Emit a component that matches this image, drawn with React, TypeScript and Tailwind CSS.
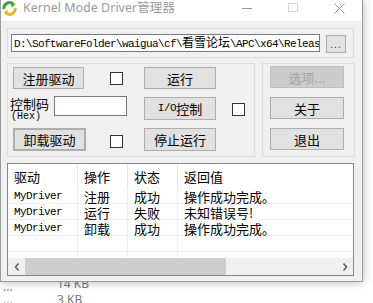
import { FC, ReactNode } from 'react'

// Windows-style dialog: Kernel Mode Driver管理器
const SANS = "font-['Noto_Sans_CJK_SC',sans-serif]"
const MONO = "font-['Liberation_Mono','Noto_Sans_CJK_SC',monospace]"

interface BtnProps {
    children: ReactNode;
    className?: string;
}

const Btn: FC<BtnProps> = ({ children, className = '' }) => (
    <div
        className={`flex items-center justify-center bg-[#e1e1e1] border border-[#adadad] text-[13px] leading-none text-black ${SANS} ${className}`}
    >
        {children}
    </div>
);

const Check: FC = () => <div className="w-[13px] h-[13px] border border-[#333333] bg-white" />;

const rows = [
    ['MyDriver', '注册', '成功', '操作成功完成。'],
    ['MyDriver', '运行', '失败', '未知错误号!'],
    ['MyDriver', '卸载', '成功', '操作成功完成。'],
];

const headers = ['驱动', '操作', '状态', '返回值'];
const colWidths = ['w-[70px]', 'w-[50px]', 'w-[50px]', 'flex-1'];

const AppIcon: FC = () => (
    <svg width="15" height="15" viewBox="0 0 15 15">
        <path d="M2 8 A5.5 5.5 0 0 1 11 3" fill="none" stroke="#3fa535" strokeWidth="3" />
        <path d="M9 0.5 L13.5 3 L9.5 6.5 Z" fill="#3fa535" />
        <path d="M13 7 A5.5 5.5 0 0 1 4 12" fill="none" stroke="#e8b923" strokeWidth="3" />
        <path d="M6 14.5 L1.5 12 L5.5 8.5 Z" fill="#e8b923" />
    </svg>
);

const App: FC = () => {
    return (
        <div className="w-[373px] h-[303px] overflow-hidden bg-white">
            <div className="relative z-10 w-[363px] h-[282px] flex flex-col bg-[#f0f0f0] border border-t-0 border-[#9a9a9a] shadow-[0_0_9px_rgba(0,0,0,0.3)]">
                {/* title bar */}
                <div className="h-[21px] bg-white flex items-start shrink-0">
                    <div className="ml-[1px] mt-[1px]">
                        <AppIcon />
                    </div>
                    <span className="ml-[6px] text-[12.5px] leading-[15px] text-[#9b9b9b] font-['Noto_Sans','Noto_Sans_CJK_SC',sans-serif]">
                        Kernel Mode Driver管理器
                    </span>
                    <div className="flex-1" />
                    <div className="w-[46px] h-[16px] flex items-center justify-center">
                        <div className="w-[10px] h-px bg-[#9b9b9b]" />
                    </div>
                    <div className="w-[46px] h-[15px] flex items-center justify-center">
                        <div className="w-[10px] h-[9px] border border-[#d6d6d6]" />
                    </div>
                    <div className="w-[46px] h-[16px] flex items-center justify-center">
                        <svg width="11" height="11" viewBox="0 0 11 11">
                            <path d="M0.5 0.5 L10.5 10.5 M10.5 0.5 L0.5 10.5" stroke="#9b9b9b" strokeWidth="1" />
                        </svg>
                    </div>
                </div>

                <div className="flex-1 flex flex-col pl-[6px]">
                    {/* path group */}
                    <div className="mt-[7px] w-[347px] h-[30px] border border-[#dcdcdc] flex items-start pl-[3px] pt-[5px]">
                        <div className="w-[309px] h-[18px] bg-white border border-[#7a7a7a] overflow-hidden whitespace-nowrap pl-[2px] flex items-center">
                            <span className={`${MONO} text-[11px] tracking-[-0.6px] leading-none text-black`}>
                                D:\SoftwareFolder\waigua\cf\
                                <span className={`${SANS} text-[12px] tracking-normal`}>看雪论坛</span>
                                \APC\x64\Release\
                            </span>
                        </div>
                        <div className="ml-[6px] mt-[1px] w-[20px] h-[18px] bg-[#e1e1e1] border border-[#adadad] flex items-end justify-center pb-[2px]">
                            <span className="text-[10px] leading-[10px] text-[#333] tracking-[1px] font-['Liberation_Sans',sans-serif]">...</span>
                        </div>
                    </div>

                    {/* buttons */}
                    <div className="mt-[5px] flex">
                        <div className="w-[248px] h-[94px] border border-[#dcdcdc] flex flex-col pl-[2px]">
                            <div className="mt-[3px] h-[22px] flex items-center">
                                <Btn className="ml-[3px] w-[71px] h-[22px]">注册驱动</Btn>
                                <div className="ml-[26px] w-[34px]">
                                    <Check />
                                </div>
                                <Btn className="w-[72px] h-[22px]">运行</Btn>
                            </div>
                            <div className="mt-[7px] h-[24px] flex items-start">
                                <div className="w-[44px] flex flex-col">
                                    <span className={`${SANS} text-[13px] leading-[14px] text-black mt-[1px]`}>控制码</span>
                                    <span className={`${MONO} text-[10px] leading-[10px] text-black mt-[1px] ml-[1px]`}>(Hex)</span>
                                </div>
                                <div className="w-[73px] h-[20px] bg-white border border-[#7a7a7a]" />
                                <Btn className="ml-[17px] mt-[1px] w-[72px] h-[23px]">
                                    <span className={`${MONO} text-[11px] tracking-[-0.5px]`}>I/O</span>控制
                                </Btn>
                                <div className="ml-[16px] mt-[7px]">
                                    <Check />
                                </div>
                            </div>
                            <div className="mt-[8px] h-[23px] flex items-center">
                                <Btn className="ml-[3px] w-[73px] h-[23px] border-2 border-[#0078d7]">卸载驱动</Btn>
                                <div className="ml-[24px] w-[34px] mt-[4px]">
                                    <Check />
                                </div>
                                <Btn className="w-[72px] h-[23px]">停止运行</Btn>
                            </div>
                        </div>

                        <div className="ml-[7px] w-[93px] h-[94px] border border-[#dcdcdc] flex flex-col pl-[7px] pt-[2px] gap-[9px]">
                            <div className={`w-[74px] h-[22px] flex items-center justify-center bg-[#cccccc] border border-[#bfbfbf] text-[13px] leading-none text-[#a3a3a3] ${SANS}`}>
                                选项...
                            </div>
                            <Btn className="w-[74px] h-[22px]">关于</Btn>
                            <Btn className="w-[74px] h-[22px]">退出</Btn>
                        </div>
                    </div>

                    {/* list view */}
                    <div className="mt-[6px] w-[347px] h-[113px] bg-white border border-[#828790] flex flex-col">
                        <div className="h-[24px] flex shrink-0">
                            {headers.map((h, i) => (
                                <div
                                    key={h}
                                    className={`${colWidths[i]} pl-[6px] flex items-center text-[13px] leading-none text-black ${SANS} ${i < 3 ? 'border-r border-[#e5e5e5]' : ''}`}
                                >
                                    {h}
                                </div>
                            ))}
                        </div>
                        {[...rows, ['', '', '', '']].map((r, ri) => (
                            <div key={ri} className="h-[16px] flex border-b border-[#f0f0f0] shrink-0">
                                {r.map((c, ci) => (
                                    <div
                                        key={ci}
                                        className={`${colWidths[ci]} pl-[6px] pt-[1px] flex items-center leading-none text-black whitespace-nowrap ${ci === 0 ? `${MONO} text-[11px] tracking-[-0.6px]` : `${SANS} text-[13px]`} ${ci < 3 ? 'border-r border-[#f0f0f0]' : ''}`}
                                    >
                                        {c}
                                    </div>
                                ))}
                            </div>
                        ))}
                        <div className="flex-1 flex">
                            {colWidths.map((w, i) => (
                                <div key={i} className={`${w} ${i < 3 ? 'border-r border-[#f0f0f0]' : ''}`} />
                            ))}
                        </div>
                        <div className="h-[17px] flex bg-[#f0f0f0] shrink-0">
                            <div className="w-[17px] flex items-center justify-center">
                                <svg width="6" height="8" viewBox="0 0 6 8">
                                    <path d="M4.5 0.5 L1.5 4 L4.5 7.5" fill="none" stroke="#606060" strokeWidth="1.6" />
                                </svg>
                            </div>
                            <div className="w-[201px] h-full bg-[#cdcdcd]" />
                            <div className="flex-1" />
                            <div className="w-[17px] flex items-center justify-center">
                                <svg width="6" height="8" viewBox="0 0 6 8">
                                    <path d="M1.5 0.5 L4.5 4 L1.5 7.5" fill="none" stroke="#606060" strokeWidth="1.6" />
                                </svg>
                            </div>
                        </div>
                    </div>
                </div>
            </div>

            {/* explorer list behind the dialog */}
            <div className="relative z-0 -mt-[6px] flex flex-col font-['Noto_Sans',sans-serif] text-[12px] text-[#7a7a7a]">
                <div className="h-[16px] flex items-center">
                    <span className="ml-[3px] w-[54px] mt-[6px] leading-none">...</span>
                    <span className="leading-none">14 KB</span>
                </div>
                <div className="h-[16px] flex items-center">
                    <span className="ml-[3px] w-[54px] leading-none">...</span>
                    <span className="leading-none">3 KB</span>
                </div>
            </div>
        </div>
    );
};

export default App;
